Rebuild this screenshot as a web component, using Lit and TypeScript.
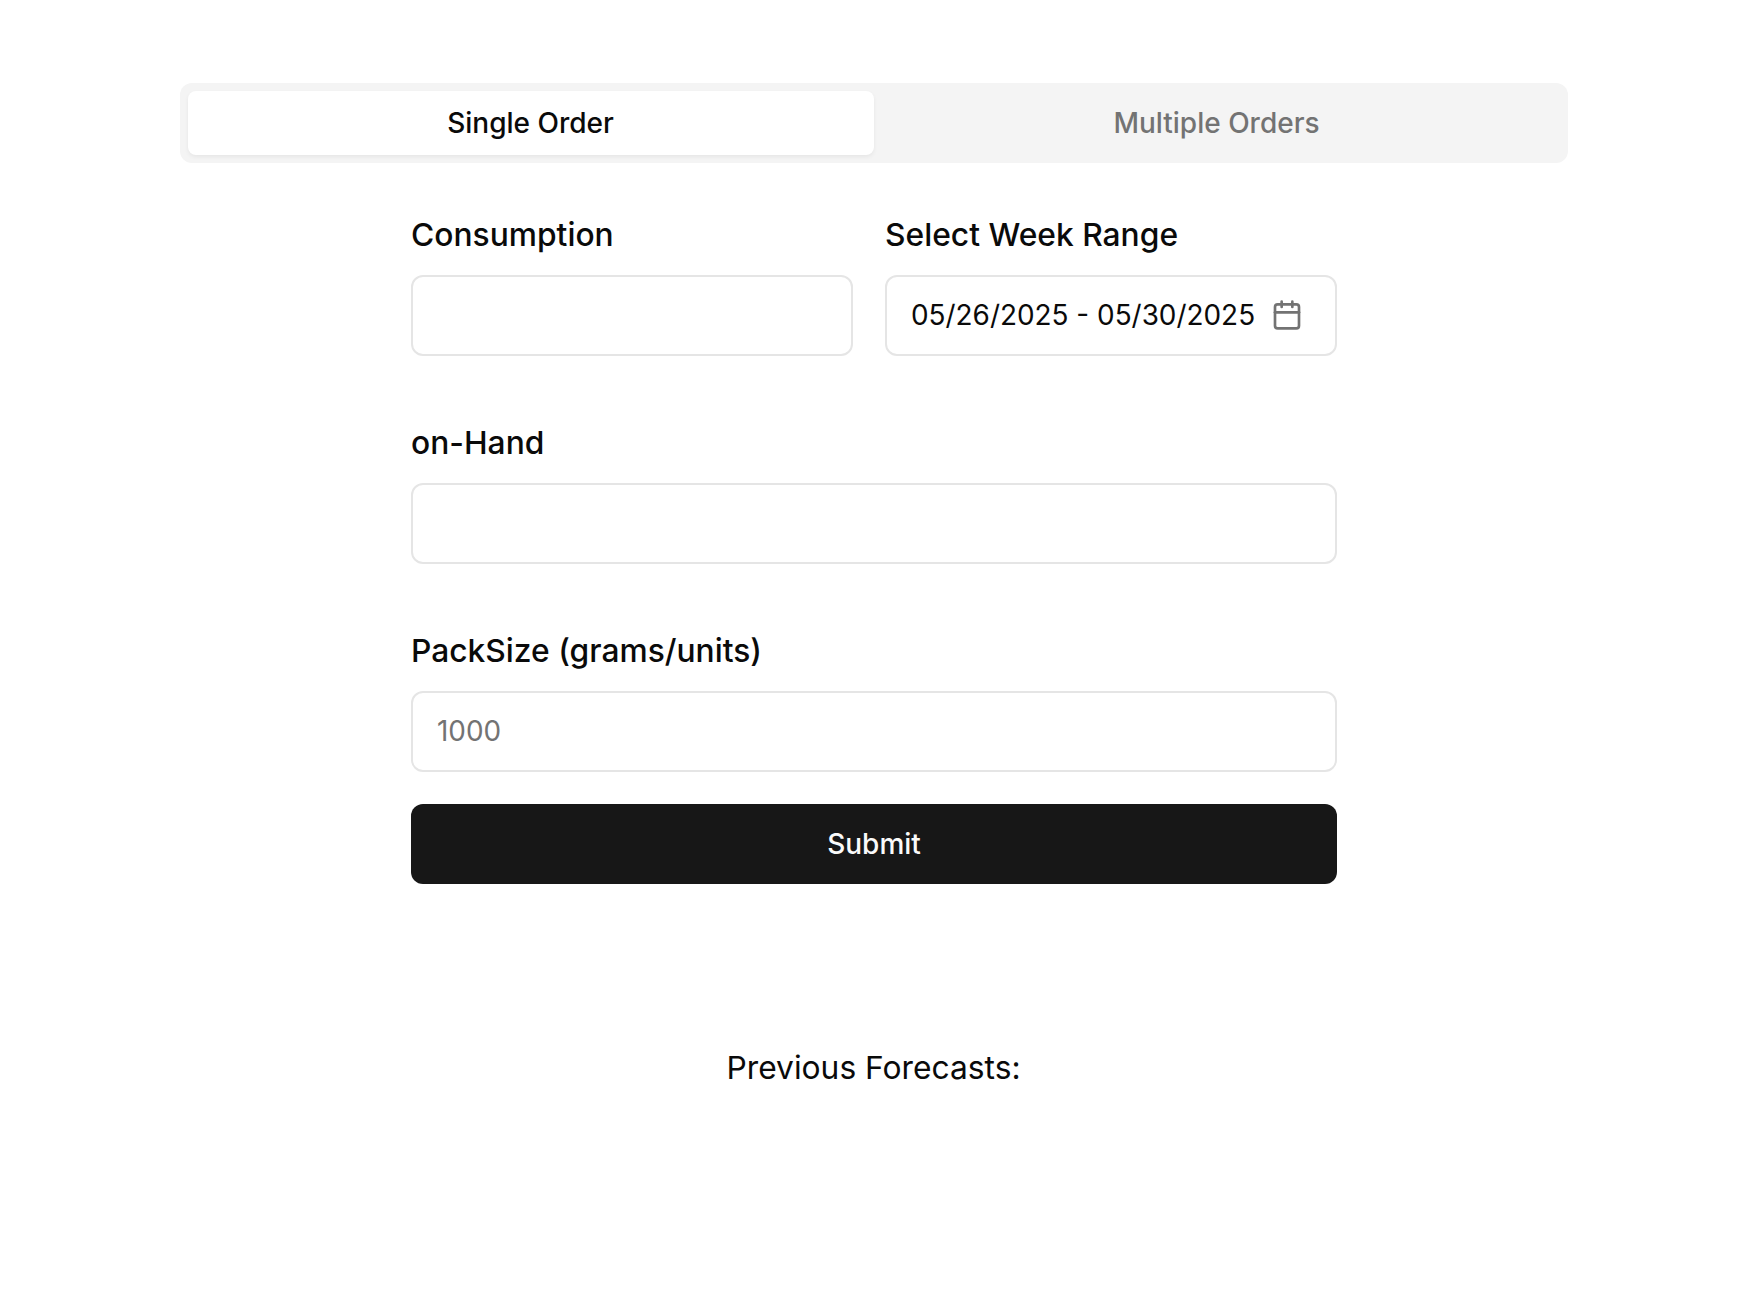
import { LitElement, html, css } from "lit";
import { customElement } from "lit/decorators.js";

@customElement("app-root")
export class AppRoot extends LitElement {
  static styles = css`
    :host { display: block; min-height: 1311px; background: #fff; font-family: Inter, "Liberation Sans", sans-serif; color: #0a0a0a; box-sizing: border-box; padding: 83px 15px 0 0; }
    * { box-sizing: border-box; }
    .page { width: 1388px; margin: 0 auto; display: flex; flex-direction: column; align-items: center; }
    .tabs { width: 100%; height: 80px; background: #f4f4f4; border-radius: 12px; padding: 8px; display: grid; grid-template-columns: 1fr 1fr; }
    .tab { display: flex; align-items: center; justify-content: center; font-size: 28px; font-weight: 500; color: #737373; border-radius: 8px; }
    .tab.active { background: #fff; color: #0a0a0a; box-shadow: 0 2px 4px rgba(0,0,0,.06); }
    form { width: 926px; margin: 48px 0 0 1px; display: flex; flex-direction: column; }
    .row { display: grid; grid-template-columns: 442px 452px; column-gap: 32px; }
    .field { display: flex; flex-direction: column; gap: 16px; margin-bottom: 63.5px; }
    .field.last { margin-bottom: 32px; }
    label { font-size: 31.75px; font-weight: 500; line-height: 48px; }
    .input { height: 80.5px; border: 2px solid #e5e5e5; border-radius: 12px; padding: 0 24px; display: flex; align-items: center; justify-content: space-between; font-size: 27.9px; white-space: nowrap; color: #0a0a0a; background: #fff; }
    .placeholder { color: #737373; }
    .icon { width: 32px; height: 32px; color: #737373; margin-right: 8px; flex: none; }
    button { height: 80px; border: 0; background: #171717; color: #fafafa; border-radius: 12px; font: 500 28px Inter, "Liberation Sans", sans-serif; }
    h2 { margin: 160px 0 0; font-size: 31.75px; font-weight: 400; line-height: 48px; text-align: center; }
  `;
  render() {
    return html`<div class="page">
      <div class="tabs">
        <div class="tab active">Single Order</div>
        <div class="tab">Multiple Orders</div>
      </div>
      <form>
        <div class="row">
          <div class="field"><label>Consumption</label><div class="input"></div></div>
          <div class="field"><label>Select Week Range</label>
            <div class="input"><span>05/26/2025 - 05/30/2025</span>
              <svg class="icon" viewBox="0 0 24 24" fill="none" stroke="currentColor" stroke-width="2" stroke-linecap="round" stroke-linejoin="round"><path d="M8 2v4"/><path d="M16 2v4"/><rect x="3" y="4" width="18" height="18" rx="2"/><path d="M3 10h18"/></svg>
            </div>
          </div>
        </div>
        <div class="field"><label>on-Hand</label><div class="input"></div></div>
        <div class="field last"><label>PackSize (grams/units)</label><div class="input"><span class="placeholder">1000</span></div></div>
        <button type="button">Submit</button>
      </form>
      <h2>Previous Forecasts:</h2>
    </div>`;
  }
}
